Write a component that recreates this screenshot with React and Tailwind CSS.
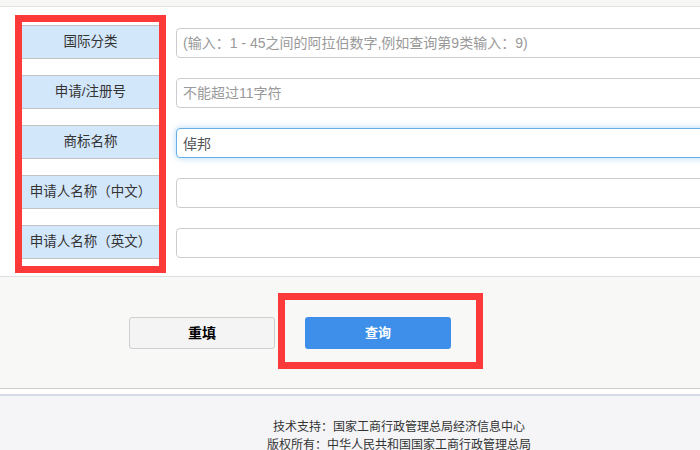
const labels = [
  '国际分类',
  '申请/注册号',
  '商标名称',
  '申请人名称（中文）',
  '申请人名称（英文）'
];

const fields = [
  { placeholder: '(输入：1 - 45之间的阿拉伯数字,例如查询第9类输入：9)', value: '' },
  { placeholder: '不能超过11字符', value: '' },
  { placeholder: '', value: '倬邦', focused: true },
  { placeholder: '', value: '' },
  { placeholder: '', value: '' }
];

const App = () => {
  return (
    <div
      className="w-[700px] h-[450px] overflow-hidden bg-white text-[#333]"
      style={{ fontFamily: '"Liberation Sans", "Noto Sans CJK SC", sans-serif' }}
    >
      {/* top strip */}
      <div className="h-[7px] bg-[#f7f7f5] border-b border-[#e3e3e3]"></div>

      {/* form rows */}
      <div className="flex pl-[15px] pt-[8px] h-[270px] border-b border-[#dedede]">
        <div className="flex flex-col gap-[16px] border-[7px] border-[#fd3a3a] pt-[3px] pb-[7px] self-start">
          {labels.map((label) => (
            <div
              key={label}
              className="w-[137px] h-[34px] flex items-center justify-center bg-[#d3e7fb] border-y border-[#c3c3c3] text-[13.5px] text-[#333] whitespace-nowrap"
            >
              {label}
            </div>
          ))}
        </div>

        <div className="flex flex-col gap-[20px] pt-[13px] ml-[10px]">
          {fields.map((f, i) => (
            <input
              key={i}
              readOnly
              value={f.value}
              placeholder={f.placeholder}
              className={`w-[560px] h-[30px] px-[6px] rounded-[4px] bg-white text-[14px] text-[#555] placeholder:text-[#999] outline-none border ${
                f.focused
                  ? 'border-[#66afe9] shadow-[0_0_6px_rgba(102,175,233,0.5)]'
                  : 'border-[#cccccc]'
              }`}
            />
          ))}
        </div>
      </div>

      {/* buttons */}
      <div className="h-[112px] bg-[#f8f8f6] border-b border-[#cccccc] flex items-start pl-[129px] pt-[16px]">
        <button className="mt-[24px] w-[146px] h-[32px] rounded-[3px] border border-[#cfcfcf] bg-[#f4f4f4] text-[14px] font-bold text-black">
          重填
        </button>
        <div className="ml-[3px] border-[7px] border-[#fd3a3a] pl-[20px] pr-[25px] pt-[17px] pb-[13px]">
          <button className="w-[146px] h-[32px] rounded-[3px] bg-[#3d8fe9] text-[13px] font-bold text-white">
            查询
          </button>
        </div>
      </div>

      {/* footer */}
      <div className="mt-[5px] border-t-2 border-[#d6d9e6] bg-[#f5f5f8] h-[60px] pl-[98px] pt-[22px] text-center text-[12px] leading-[18px] text-[#333]">
        <p>技术支持：国家工商行政管理总局经济信息中心</p>
        <p>版权所有：中华人民共和国国家工商行政管理总局</p>
      </div>
    </div>
  );
};

export default App;
